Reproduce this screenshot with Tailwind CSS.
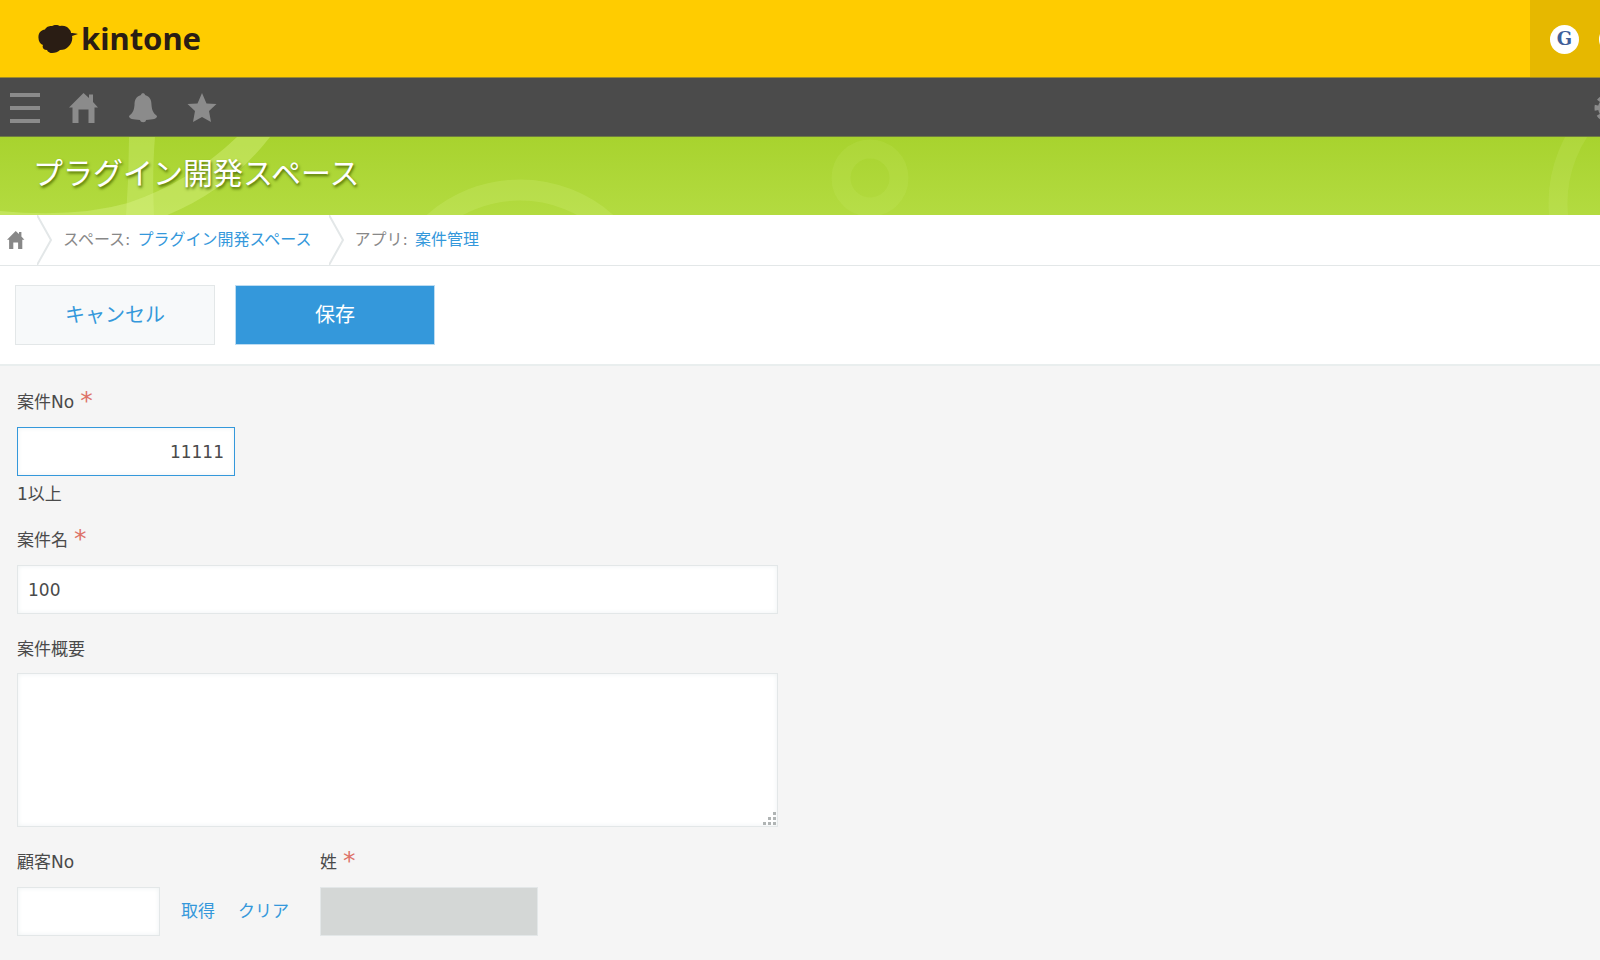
<!DOCTYPE html>
<html lang="ja">
<head>
    <meta charset="UTF-8">
    <meta name="viewport" content="width=device-width, initial-scale=1.0">
    <title>案件管理 - kintone</title>
    <script src="https://cdn.jsdelivr.net/npm/@tailwindcss/browser@4"></script>
</head>
<body class="min-h-screen overflow-x-hidden bg-[#f5f5f5] font-['DejaVu_Sans','Noto_Sans_CJK_JP',sans-serif] text-[17px] text-[#4a4a4a]">
    <!-- Brand bar -->
    <header class="flex h-[78px] justify-between border-b border-[#9c8a2c] bg-[#ffcc00]">
        <a href="#" class="flex items-center gap-[3px] pl-[38px] text-[#2a1d14]">
            <svg class="h-[30px] w-10" viewBox="0 0 40 30" fill="currentColor" aria-hidden="true">
                <path d="M.5 14C0 9 3 6 7 5.500C9 2 12 2 14 2C16 .5 20 .5 22 2C26 1 30 3 31 5C33 7 33 8 33 9C35 9 37 9 40 10C38 11 36 11 34 12C35 16 33 20 31 22C28 25 26 26 22 26C19 29 11 31 9 26C5 26 4 23 5 21C2 20 .5 17 .5 14Z"/>
            </svg>
            <span class="pb-[2px] font-['Noto_Sans',sans-serif] text-[31px] leading-[40px] font-bold">kintone</span>
        </a>
        <div class="flex w-[70px] items-center gap-5 overflow-hidden bg-[#e6b800] pt-px pl-5">
            <button type="button" class="size-[29px] shrink-0 rounded-full bg-white font-['DejaVu_Serif',serif] text-[18px] leading-none font-bold text-[#3f5f9a]">G</button>
            <span class="size-[29px] shrink-0 rounded-full bg-white"></span>
        </div>
    </header>

    <!-- Global navigation -->
    <nav class="flex h-[59px] items-center justify-between overflow-hidden border-b border-[#6d7b42] bg-[#4b4b4b] pt-[2px] text-[#8b8b8b]">
        <div class="flex gap-[29px] pl-[10px]">
            <button type="button" aria-label="メニュー">
                <svg class="size-[30px]" viewBox="0 0 30 30" fill="currentColor"><path d="M0 0h30v4H0zM0 13h30v4H0zM0 26h30v4H0z"/></svg>
            </button>
            <a href="#" aria-label="ポータル">
                <svg class="size-[30px]" viewBox="0 0 30 30" fill="currentColor"><path d="M14.500 0L20 5V1.500H24V9L29 14.500H25.500V30H19.500V16.500H9.500V30H3.500V14.500H0Z"/></svg>
            </a>
            <a href="#" aria-label="通知">
                <svg class="size-[30px]" viewBox="0 0 30 30" fill="currentColor"><path d="M13 2C13 -.5 17 -.5 17 2C22 3.500 23.500 7 23.500 12C24 17 25 20 29 23C29 26 25 26.500 18 27C18 30 12.500 30 12 27C5 26.500 1 26 1 23C5 20 6 17 6.500 12C6.500 7 8 3.500 13 2Z"/></svg>
            </a>
            <a href="#" aria-label="お気に入り">
                <svg class="size-[30px]" viewBox="0 0 30 30" fill="currentColor"><path d="M15 0L19.500 10.500L29.500 11L22 18L24 29L15 24L6 29L8 18L.5 11L10.500 10.500Z"/></svg>
            </a>
        </div>
        <button type="button" aria-label="設定" class="-mr-6">
            <svg class="size-[30px]" viewBox="0 0 30 30" fill="none" stroke="currentColor"><circle cx="15" cy="15" r="8" stroke-width="6"/><circle cx="15" cy="15" r="12" stroke-width="5" stroke-dasharray="5 4.420" stroke-dashoffset="2.500"/></svg>
        </button>
    </nav>

    <!-- Space banner -->
    <div class="relative h-[78px] overflow-hidden bg-linear-to-b from-[#a8d32e] to-[#b3db40]">
        <svg class="absolute top-0 left-0 h-[79px] w-[1600px]" viewBox="0 0 1600 79" fill="#dcf48c" aria-hidden="true">
            <path opacity=".3" d="M129 0H155Q152 35 154 79H126Q129 40 129 0Z"/>
            <path opacity=".38" d="M237 0H270Q228 54 165 79H0V74Q75 81 128 66Q190 45 237 0Z"/>
            <circle opacity=".2" cx="520" cy="183" r="130" fill="none" stroke="#dcf48c" stroke-width="21"/>
            <circle opacity=".11" cx="870" cy="41" r="29" fill="none" stroke="#dcf48c" stroke-width="19"/>
            <circle opacity=".14" cx="1688" cy="66" r="130" fill="none" stroke="#dcf48c" stroke-width="19"/>
        </svg>
        <h1 class="relative pt-[13px] pl-[33px] text-[30px] leading-[48px] text-white text-shadow-[1px_2px_3px_#4d6b00]">プラグイン開発スペース</h1>
    </div>

    <!-- Breadcrumb -->
    <nav class="flex h-[51px] items-stretch border-b border-[#e3e7e8] bg-white text-base text-[#888888]">
        <a href="#" aria-label="ホーム" class="flex w-[37px] items-center pl-[7px]">
            <svg class="h-[18px] w-[18px]" viewBox="0 0 30 30" preserveAspectRatio="none" fill="currentColor"><path d="M14.500 0L20 5V1.500H24V9L29 14.500H25.500V30H18.500V19H10.500V30H3.500V14.500H0Z"/></svg>
        </a>
        <svg class="h-[50px] w-[15px]" viewBox="0 0 15 50" fill="none" stroke="#e3e7e8" stroke-width="2" aria-hidden="true"><path d="M0 0L14 25L0 50"/></svg>
        <span class="flex items-center gap-[7px] pl-[11px]">スペース: <a href="#" class="text-[#3498db]">プラグイン開発スペース</a></span>
        <svg class="ml-[17px] h-[50px] w-[15px]" viewBox="0 0 15 50" fill="none" stroke="#e3e7e8" stroke-width="2" aria-hidden="true"><path d="M0 0L14 25L0 50"/></svg>
        <span class="flex items-center gap-[7px] pl-[11px]">アプリ: <a href="#" class="text-[#3498db]">案件管理</a></span>
    </nav>

    <form>
        <div class="flex gap-5 border-b-2 border-[#e9eeee] bg-white px-[15px] py-[19px] text-xl">
            <button type="button" class="h-[60px] w-[200px] border border-[#e3e7e8] bg-[#f7f9fa] text-[#3498db]">キャンセル</button>
            <button type="submit" class="h-[60px] w-[200px] border border-[#bcdcf2] bg-[#3498db] text-white">保存</button>
        </div>

        <div class="flex max-w-[795px] flex-col gap-[23px] px-[17px] pt-6 pb-[22px]">
            <div>
                <label for="case-no" class="mb-[11px] flex h-[26px] items-center gap-[6px]">案件No <span class="pb-1 text-[25px] leading-[22px] text-[#dd7268]">*</span></label>
                <input id="case-no" type="text" value="11111" class="block h-[49px] w-[218px] border border-[#3498db] bg-white px-[10px] text-right shadow-[inset_0_0_5px_#edf1f2]">
                <p class="mt-[7px] leading-[22px]">1以上</p>
            </div>
            <div>
                <label for="case-name" class="mb-[11px] flex h-[26px] items-center gap-[6px]">案件名 <span class="pb-1 text-[25px] leading-[22px] text-[#dd7268]">*</span></label>
                <input id="case-name" type="text" value="100" class="block h-[49px] w-full border border-[#e3e7e8] bg-white px-[10px] shadow-[inset_0_0_5px_#edf1f2]">
            </div>
            <div>
                <label for="case-summary" class="mb-[10px] flex h-[26px] items-center">案件概要</label>
                <div class="relative">
                    <textarea id="case-summary" class="block h-[154px] w-full resize-none border border-[#e3e7e8] bg-white p-[10px] shadow-[inset_0_0_5px_#edf1f2]"></textarea>
                    <svg class="pointer-events-none absolute right-[2px] bottom-[2px] size-[13px]" viewBox="0 0 13 13" fill="#b0b4b4" aria-hidden="true"><path d="M10 0h3v3h-3zM5 5h3v3h-3zM10 5h3v3h-3zM0 10h3v3H0zM5 10h3v3h-3zM10 10h3v3h-3z"/></svg>
                </div>
            </div>
            <div class="flex">
                <div class="w-[303px]">
                    <label for="client-no" class="mb-[11px] flex h-[26px] items-center">顧客No</label>
                    <div class="flex items-center">
                        <input id="client-no" type="text" class="h-[49px] w-[143px] border border-[#e3e7e8] bg-white px-[10px] shadow-[inset_0_0_5px_#edf1f2]">
                        <button type="button" class="ml-[21px] text-[#3498db]">取得</button>
                        <button type="button" class="ml-[23px] text-[#3498db]">クリア</button>
                    </div>
                </div>
                <div>
                    <label for="last-name" class="mb-[11px] flex h-[26px] items-center gap-[6px]">姓 <span class="pb-1 text-[25px] leading-[22px] text-[#dd7268]">*</span></label>
                    <input id="last-name" type="text" disabled class="block h-[49px] w-[218px] border border-[#e3e7e8] bg-[#d4d7d6] px-[10px]">
                </div>
            </div>
        </div>
    </form>
</body>
</html>
